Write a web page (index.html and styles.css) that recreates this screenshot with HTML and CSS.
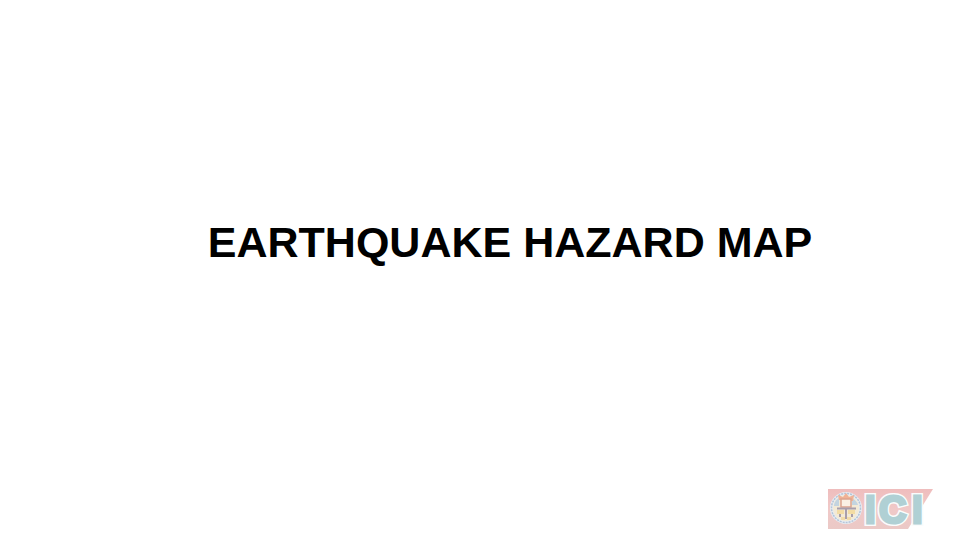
FILE: index.html
```html
<!DOCTYPE html>
<html lang="en">
<head>
<meta charset="utf-8">
<title>Earthquake Hazard Map</title>
<link rel="stylesheet" href="styles.css">
</head>
<body>
<main class="slide">
<h1 class="title">EARTHQUAKE HAZARD MAP</h1>
<footer class="footer">
<svg class="logo" viewBox="0 0 106 41" role="img" aria-label="ICI">
<defs>
<linearGradient id="band" x1="0" y1="0" x2="0" y2="1"><stop offset="0" stop-color="#efbdbd"/><stop offset=".5" stop-color="#f0c9c8"/><stop offset="1" stop-color="#ebc9c6"/></linearGradient>
</defs>
<path d="M0 0h105L80 40H0z" fill="url(#band)"/>
<circle cx="18" cy="19" r="16" fill="#e8edf2"/>
<circle cx="18" cy="19" r="14.500" fill="none" stroke="#b4c4d8" stroke-width="1.500" stroke-dasharray="2 1"/>
<circle cx="18" cy="19" r="13" fill="#f3ead6"/>
<path d="M6 16q1-5 5-7v8H6zm18-7q5 3 6 7h-6z" fill="#c3d4e0"/>
<path d="M11 11l-1-5 5 2 3-4 3 4 5-2-1 6z" fill="#f0b296"/>
<path d="M13 10h10v8H13z" fill="#faf1e4" stroke="#dba48e" stroke-width="1.500"/>
<path d="M9 19.500h19M18 20v10M12 24v4M24 24v4" fill="none" stroke="#a89eab" stroke-width="2"/>
<path d="M9 21h7v4H9zm11 0h7v4h-7z" fill="#f3dca4"/>
<path d="M13 28h4v3h-4zm6 0h4v3h-4z" fill="#f2dba8"/>
<g class="logo-text logo-outline"><text x="37" y="34">I</text><text x="51" y="34">C</text><text x="84" y="34">I</text></g>
<g class="logo-text logo-face" aria-hidden="true"><text x="37" y="34">I</text><text x="51" y="34">C</text><text x="84" y="34">I</text></g>
</svg>
</footer>
</main>
</body>
</html>
```
FILE: styles.css
```css
* { box-sizing: border-box; }
body { margin: 0; background: #fff; color: #000; font-family: "Liberation Sans", Arial, sans-serif; }
.slide { display: grid; grid-template-rows: 1fr auto; min-height: 100vh; padding: 5px 26px 10px; }
.title { margin: 0; padding: 0 0 10px 60px; place-self: center; font-size: 43px; line-height: 48px; font-weight: 700; text-align: center; }
.footer { display: flex; justify-content: flex-end; }
.logo { display: block; width: 106px; height: 41px; overflow: visible; }
.logo-text { font-weight: 700; font-size: 38px; }
.logo-outline { fill: #fafcfc; stroke: #fafcfc; stroke-width: 6px; }
.logo-face { fill: #b0d0d4; stroke: #b0d0d4; stroke-width: 3px; }
```
